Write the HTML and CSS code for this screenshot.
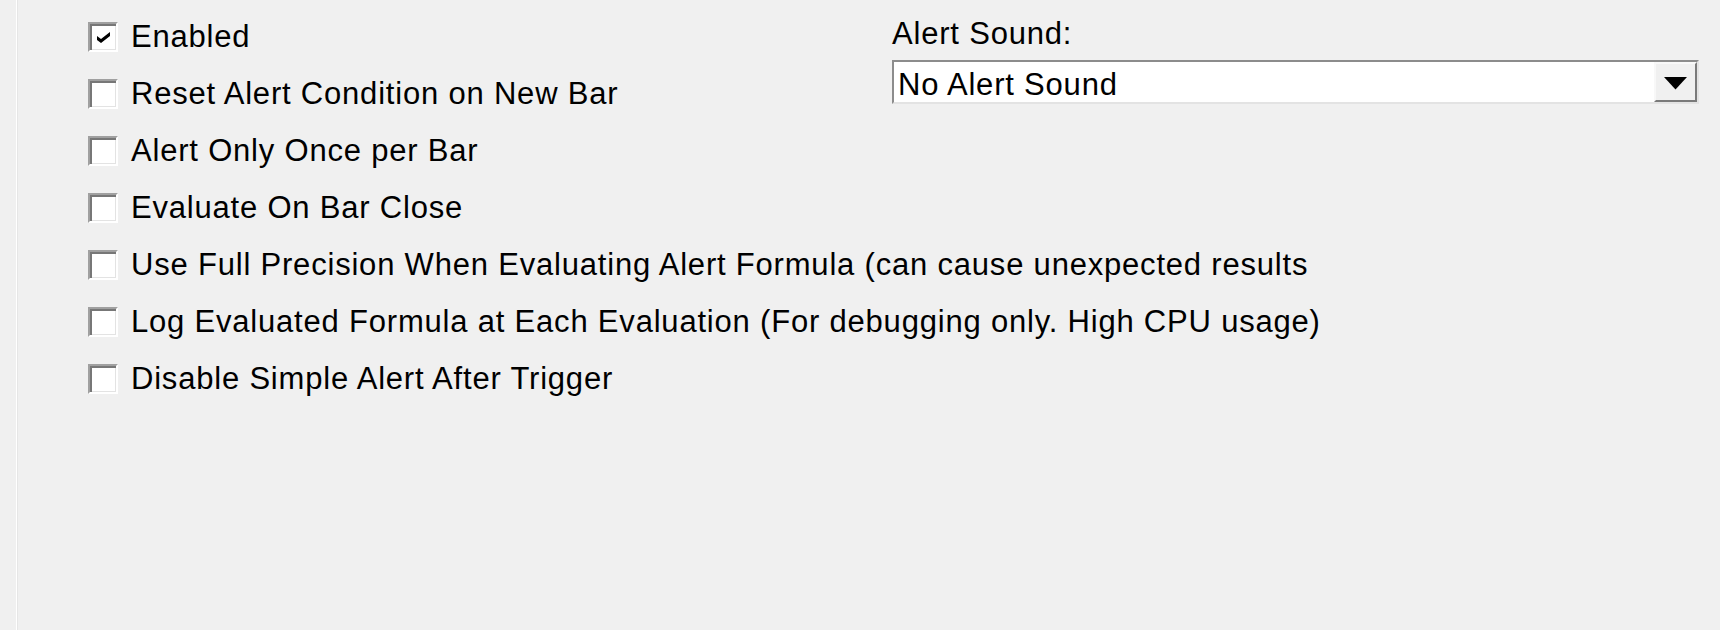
FILE: index.html
```html
<!DOCTYPE html>
<html lang="en">
<head>
    <meta charset="UTF-8">
    <title>Alert settings</title>
    <link rel="stylesheet" href="styles.css">
</head>
<body>
    <div class="alertPanel">
        <div class="optionList">
            <label class="option">
                <span class="checkBox checked">
                    <svg width="13" height="11" viewBox="0 0 13 11"><polygon points="0,4 4,7 13,0 13,4 4,11 0,8" fill="#000"/></svg>
                </span>
                <span class="optionText">Enabled</span>
            </label>
            <label class="option">
                <span class="checkBox"></span>
                <span class="optionText">Reset Alert Condition on New Bar</span>
            </label>
            <label class="option">
                <span class="checkBox"></span>
                <span class="optionText">Alert Only Once per Bar</span>
            </label>
            <label class="option">
                <span class="checkBox"></span>
                <span class="optionText">Evaluate On Bar Close</span>
            </label>
            <label class="option">
                <span class="checkBox"></span>
                <span class="optionText clipped">Use Full Precision When Evaluating Alert Formula (can cause unexpected results)</span>
            </label>
            <label class="option">
                <span class="checkBox"></span>
                <span class="optionText">Log Evaluated Formula at Each Evaluation (For debugging only. High CPU usage)</span>
            </label>
            <label class="option">
                <span class="checkBox"></span>
                <span class="optionText">Disable Simple Alert After Trigger</span>
            </label>
        </div>
        <div class="soundBox">
            <div class="soundLabel">Alert Sound:</div>
            <div class="comboBox">
                <span class="comboText">No Alert Sound</span>
                <span class="comboButton">
                    <svg width="23" height="13" viewBox="0 0 23 13"><polygon points="0,0 23,0 11.5,12.5" fill="#000"/></svg>
                </span>
            </div>
        </div>
    </div>
</body>
</html>
```

FILE: styles.css
```css
html, body {
    margin: 0;
    height: 100%;
    background-color: #f0f0f0;
}
body {
    font-family: "Liberation Sans", Arial, sans-serif;
    font-size: 31px;
    letter-spacing: 0.8px;
    line-height: 36px;
    color: #000;
    overflow: hidden;
}
.alertPanel {
    display: grid;
    grid-template-columns: 804px 807px;
    align-items: start;
    height: 100%;
    box-sizing: border-box;
    margin-left: 16px;
    border-left: 1px solid #ffffff;
    box-shadow: inset 1px 0 #e6e6e6;
    padding: 8px 0 0 71px;
}
.optionList {
    display: flex;
    flex-direction: column;
}
.option {
    display: flex;
    align-items: center;
    height: 57px;
    white-space: nowrap;
}
.checkBox {
    display: flex;
    align-items: center;
    justify-content: center;
    width: 30px;
    height: 30px;
    box-sizing: border-box;
    flex-shrink: 0;
    background-color: #fff;
    border-style: solid;
    border-width: 2px;
    border-color: #a0a0a0 #ffffff #ffffff #a0a0a0;
    box-shadow: inset 2px 2px #777777, inset -1px -1px #e3e3e3;
}
.checkBox svg {
    margin: 1px 0 0 1px;
}
.optionText {
    flex-shrink: 0;
    margin-left: 13px;
}
.optionText.clipped {
    display: inline-block;
    width: 1177px;
    overflow: hidden;
}
.soundBox {
    display: flex;
    flex-direction: column;
    margin-top: 8px;
}
.soundLabel {
    height: 36px;
    margin-bottom: 8px;
}
.comboBox {
    display: flex;
    align-items: center;
    justify-content: space-between;
    height: 44px;
    box-sizing: border-box;
    background-color: #fff;
    border-style: solid;
    border-width: 2px;
    border-color: #8c8c8c #e3e3e3 #e3e3e3 #8c8c8c;
    padding: 0 0 0 4px;
}
.comboText {
    margin-top: 5px;
}
.comboButton {
    display: flex;
    align-items: center;
    justify-content: center;
    width: 43px;
    height: 40px;
    box-sizing: border-box;
    background-color: #f0f0f0;
    border-style: solid;
    border-width: 2px;
    border-color: #f8f8f8 #7a7a7a #7a7a7a #f8f8f8;
}
.comboButton svg {
    margin-top: 2px;
}
```
